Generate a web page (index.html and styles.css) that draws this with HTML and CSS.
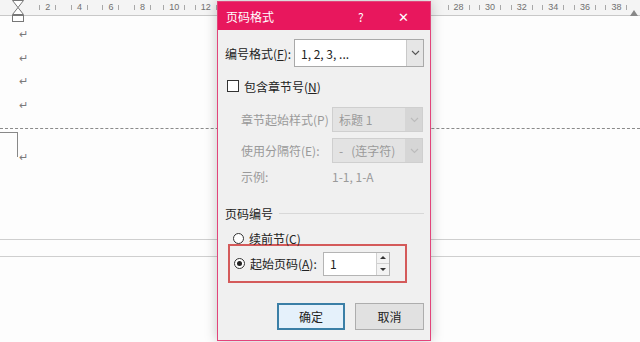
FILE: index.html
```html
<!DOCTYPE html>
<html lang="zh-CN">
<head>
    <meta charset="UTF-8">
    <title>页码格式</title>
    <link rel="stylesheet" href="styles.css">
</head>
<body>
    <div class="ruler">
        <svg class="indent" width="14" height="24" viewBox="0 0 14 24">
            <path d="M1.5 0.5 L12.5 0.5 L7 7.5 Z M7 7.5 L12.5 14.5 L1.5 14.5 Z" fill="#fff" stroke="#777"/>
            <rect x="1.5" y="15.5" width="11" height="6" fill="#fff" stroke="#777"/>
        </svg>
        <div class="marks">
            <span class="cell"><i></i><b>2</b><i></i></span>
            <span class="cell"><i></i><b>4</b><i></i></span>
            <span class="cell"><i></i><b>6</b><i></i></span>
            <span class="cell"><i></i><b>8</b><i></i></span>
            <span class="cell"><i></i><b>10</b><i></i></span>
            <span class="cell"><i></i><b>12</b><i></i></span>
            <!-- 14 to 26 sit under the dialog -->
            <span class="cell hidden"></span>
            <span class="cell hidden"></span>
            <span class="cell hidden"></span>
            <span class="cell hidden"></span>
            <span class="cell hidden"></span>
            <span class="cell hidden"></span>
            <span class="cell hidden"></span>
            <span class="cell"><i></i><b>28</b><i></i></span>
            <span class="cell"><i></i><b>30</b><i></i></span>
            <span class="cell"><i></i><b>32</b><i></i></span>
            <span class="cell"><i></i><b>34</b><i></i></span>
            <span class="cell"><i></i><b>36</b><i></i></span>
            <span class="cell"><i></i><b>38</b><i></i></span>
        </div>
        <span class="right-mark"></span>
    </div>

    <div class="page">
        <p class="para">↵</p>
        <p class="para">↵</p>
        <p class="para">↵</p>
        <p class="para">↵</p>
        <div class="section-break"></div>
        <div class="footer-area">
            <div class="corner"></div>
            <p class="para">↵</p>
        </div>
        <div class="page-gap"></div>
    </div>

    <div class="dialog">
        <div class="titlebar">
            <span class="title">页码格式</span>
            <span class="help">?</span>
            <span class="close">✕</span>
        </div>
        <div class="body">
            <div class="row first">
                <label class="lbl-fmt">编号格式(<u>F</u>):</label>
                <div class="select wide">
                    <span class="value">1, 2, 3, ...</span>
                    <span class="drop">
                        <svg width="9" height="6" viewBox="0 0 9 6"><path d="M1 1 L4.5 4.5 L8 1" fill="none" stroke="#555" stroke-width="1.1"/></svg>
                    </span>
                </div>
            </div>

            <div class="row check-row">
                <span class="checkbox"></span>
                <label>包含章节号(<u>N</u>)</label>
            </div>

            <div class="sub">
                <div class="row sub-row">
                    <label class="muted lbl-sub">章节起始样式(P)</label>
                    <div class="select off">
                        <span class="value">标题 1</span>
                        <span class="drop"><svg width="9" height="6" viewBox="0 0 9 6"><path d="M1 1 L4.5 4.5 L8 1" fill="none" stroke="#bbb" stroke-width="1.1"/></svg></span>
                    </div>
                </div>
                <div class="row sub-row second">
                    <label class="muted lbl-sub">使用分隔符(E):</label>
                    <div class="select off">
                        <span class="value">-&nbsp;&nbsp; (连字符)</span>
                        <span class="drop"><svg width="9" height="6" viewBox="0 0 9 6"><path d="M1 1 L4.5 4.5 L8 1" fill="none" stroke="#bbb" stroke-width="1.1"/></svg></span>
                    </div>
                </div>
                <div class="row example">
                    <label class="muted lbl-sub">示例:</label>
                    <span class="muted">1-1, 1-A</span>
                </div>
            </div>

            <div class="group-title">
                <span>页码编号</span>
                <span class="rule"></span>
            </div>

            <div class="row radio-row">
                <span class="radio"></span>
                <label>续前节(C)</label>
            </div>

            <div class="highlight">
                <span class="radio on"></span>
                <label class="lbl-start">起始页码(<u>A</u>):</label>
                <div class="spin">
                    <span class="value">1</span>
                    <span class="arrows">
                        <span class="up"></span>
                        <span class="down"></span>
                    </span>
                </div>
            </div>

            <div class="buttons">
                <button class="btn primary">确定</button>
                <button class="btn">取消</button>
            </div>
        </div>
    </div>
</body>
</html>
```

FILE: styles.css
```css
* {
    box-sizing: border-box;
}
body {
    margin: 0;
    width: 640px;
    height: 342px;
    overflow: hidden;
    background-color: #fdfdfd;
    font-family: "Noto Sans CJK SC", "Noto Sans", sans-serif;
    font-size: 12px;
    color: #222;
    position: relative;
}

/* ruler */
.ruler {
    height: 16px;
    background-color: #f4f4f4;
    border-bottom: 1px solid #c8c8c8;
    display: flex;
    position: relative;
}
.indent {
    position: absolute;
    left: 11px;
    top: 0;
}
.marks {
    display: flex;
    padding-left: 32px;
    color: #707070;
    font-family: "Liberation Sans", sans-serif;
    font-size: 9px;
    line-height: 15px;
}
.cell {
    width: 31.6px;
    flex: none;
    display: flex;
    justify-content: center;
    align-items: center;
    gap: 5px;
}
.cell b {
    font-weight: normal;
}
.cell i {
    width: 1px;
    height: 5px;
    background-color: #a8a8a8;
}
.right-mark {
    position: absolute;
    right: 2px;
    top: 10px;
    width: 0;
    height: 0;
    border-left: 4px solid transparent;
    border-right: 4px solid transparent;
    border-bottom: 6px solid #888;
}

/* document */
.page {
    padding-top: 6px;
}
.para {
    margin: 0;
    height: 23.5px;
    padding-left: 19px;
    color: #7a7a7a;
    font-size: 11px;
    line-height: 23.5px;
}
.section-break {
    margin-top: 12px;
    border-top: 1px dashed #8a8a8a;
}
.footer-area {
    position: relative;
    height: 110px;
    padding-top: 16px;
}
.corner {
    position: absolute;
    left: 0;
    top: 3px;
    width: 18px;
    height: 25px;
    border-top: 1px solid #888;
    border-right: 1px solid #888;
}
.page-gap {
    height: 18px;
    border-top: 1px solid #cfcfcf;
    border-bottom: 1px solid #cfcfcf;
    background-color: #fdfdfd;
}

/* dialog window */
.dialog {
    position: absolute;
    left: 217px;
    top: 1px;
    width: 214px;
    height: 340px;
    background-color: #f0f0f0;
    border: 1px solid #e2447a;
    box-shadow: 0 0 12px rgba(0, 0, 0, 0.22);
}
.titlebar {
    height: 28px;
    background-color: #e8175d;
    color: #fff;
    display: flex;
    align-items: center;
    padding-left: 8px;
}
.title {
    flex: 1;
    font-size: 12px;
}
.help {
    width: 40px;
    font-size: 12px;
}
.close {
    width: 32px;
    font-size: 13px;
}
.body {
    padding: 0 6px 0 7px;
}
.row {
    display: flex;
    align-items: center;
}
.first {
    margin-top: 9px;
    height: 28px;
}
.lbl-fmt {
    width: 69px;
}
.select {
    display: flex;
    height: 100%;
    border: 1px solid #a9a9a9;
    background-color: #fff;
}
.select.wide {
    width: 130px;
}
.select .value {
    flex: 1;
    padding-left: 6px;
    display: flex;
    align-items: center;
}
.drop {
    width: 17px;
    border-left: 1px solid #c9c9c9;
    background-color: #e6e6e6;
    display: flex;
    align-items: center;
    justify-content: center;
}
.select.off {
    width: 91px;
    background-color: #e3e3e3;
    border-color: #cfcfcf;
    color: #9a9a9a;
}
.select.off .drop {
    background-color: #d6d6d6;
    border-left-color: #d6d6d6;
}

.check-row {
    margin-top: 12px;
    height: 14px;
    gap: 5px;
    padding-left: 2px;
}
.checkbox {
    width: 12px;
    height: 12px;
    border: 1px solid #333;
    background-color: #fff;
}

.sub {
    padding-left: 16px;
}
.sub-row {
    margin-top: 14px;
    height: 25px;
}
.sub-row.second {
    margin-top: 6px;
}
.lbl-sub {
    width: 91px;
}
.muted {
    color: #9a9a9a;
}
.example {
    margin-top: 5px;
    height: 16px;
}

.group-title {
    margin-top: 21px;
    height: 16px;
    display: flex;
    align-items: center;
    gap: 6px;
}
.group-title .rule {
    flex: 1;
    border-top: 1px solid #d8d8d8;
}

.radio-row {
    margin-top: 11px;
    height: 12px;
    padding-left: 8px;
    gap: 5px;
}
.radio {
    width: 11px;
    height: 11px;
    border: 1px solid #333;
    border-radius: 50%;
    background-color: #fff;
    display: flex;
    align-items: center;
    justify-content: center;
}
.radio.on::after {
    content: "";
    width: 5px;
    height: 5px;
    border-radius: 50%;
    background-color: #222;
}

.highlight {
    margin-left: 3px;
    width: 179px;
    height: 39px;
    border: 2px solid #d45a5a;
    display: flex;
    align-items: center;
    padding-left: 4px;
    gap: 5px;
}
.lbl-start {
    width: 68px;
}
.spin {
    width: 67px;
    height: 24px;
    display: flex;
    border: 1px solid #b4b4b4;
    background-color: #fff;
}
.spin .value {
    flex: 1;
    padding-left: 6px;
    display: flex;
    align-items: center;
}
.arrows {
    width: 13px;
    display: flex;
    flex-direction: column;
    border-left: 1px solid #d0d0d0;
}
.up, .down {
    flex: 1;
    display: flex;
    align-items: center;
    justify-content: center;
    background-color: #f3f3f3;
}
.up {
    border-bottom: 1px solid #d0d0d0;
}
.up::after {
    content: "";
    border-left: 3px solid transparent;
    border-right: 3px solid transparent;
    border-bottom: 3px solid #333;
}
.down::after {
    content: "";
    border-left: 3px solid transparent;
    border-right: 3px solid transparent;
    border-top: 3px solid #333;
}

.buttons {
    margin-top: 20px;
    display: flex;
    justify-content: flex-end;
    gap: 10px;
}
.btn {
    width: 69px;
    height: 27px;
    font-family: "Noto Sans CJK SC", sans-serif;
    font-size: 12px;
    color: #222;
    background-color: #e1e1e1;
    border: 1px solid #adadad;
}
.btn.primary {
    width: 68px;
    background-color: #e5f1fb;
    border: 2px solid #3b7fa6;
}
```
